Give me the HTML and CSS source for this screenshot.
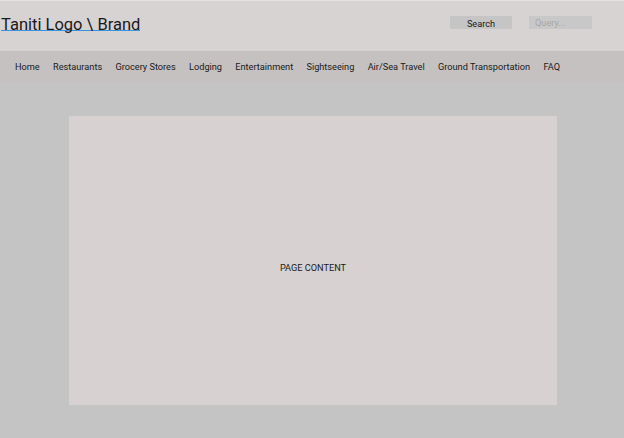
FILE: index.html
```html
<!DOCTYPE html>
<html lang="en">
<head>
<meta charset="utf-8">
<title>Taniti</title>
<link rel="stylesheet" href="styles.css">
</head>
<body>
<header class="site-header">
  <a class="brand" href="#">Taniti Logo \ Brand</a>
  <div class="search">
    <button class="search-btn" type="button">Search</button>
    <input class="search-input" type="text" placeholder="Query...">
  </div>
</header>
<nav class="main-nav">
  <a href="#">Home</a>
  <a href="#">Restaurants</a>
  <a href="#">Grocery Stores</a>
  <a href="#">Lodging</a>
  <a href="#">Entertainment</a>
  <a href="#">Sightseeing</a>
  <a href="#">Air/Sea Travel</a>
  <a href="#">Ground Transportation</a>
  <a href="#">FAQ</a>
</nav>
<main class="main">
  <section class="content">PAGE CONTENT</section>
</main>
</body>
</html>
```

FILE: styles.css
```css
* { box-sizing: border-box; }
html, body { margin: 0; padding: 0; }
body {
  background: #c4c4c4;
  font-family: Roboto, "Liberation Sans", sans-serif;
  color: #1e1e1e;
  height: 438px;
  overflow: hidden;
}
.site-header {
  height: 51px;
  background: #d8d3d3;
  border-top: 1px solid #e6e3e3;
  display: flex;
  align-items: flex-start;
  justify-content: space-between;
}
.brand {
  display: block;
  margin-top: 16px;
  margin-left: 1px;
  font-size: 16.5px;
  height: 14px;
  line-height: 16px;
  color: #1a1a1a;
  text-decoration: none;
  border-bottom: 1px solid #3a92dc;
}
.search {
  display: flex;
  gap: 17px;
  margin-top: 15px;
  margin-right: 32px;
}
.search-btn {
  width: 62px;
  height: 13px;
  padding: 0;
  border: 0;
  background: #c6c5c5;
  font-family: Roboto, "Liberation Sans", sans-serif;
  font-size: 9.2px;
  line-height: 13px;
  padding-top: 1px;
  color: #1a1a1a;
}
.search-input {
  width: 63px;
  height: 13px;
  padding: 0 0 0 6px;
  border: 0;
  background: #c9c8c8;
  font-family: Roboto, "Liberation Sans", sans-serif;
  font-size: 9.2px;
  line-height: 13px;
  outline: none;
}
.search-input::placeholder { color: #a8a6a6; }
.main-nav {
  height: 31px;
  background: #c5c1c0;
  display: flex;
  align-items: center;
  gap: 13.3px;
  padding-left: 15px;
}
.main-nav a {
  font-size: 9.2px;
  color: #1a1a1a;
  text-decoration: none;
}
.main {
  padding: 34px 67px 0 69px;
}
.content {
  height: 289px;
  background: #d7d1d1;
  display: flex;
  align-items: center;
  justify-content: center;
  padding-top: 14px;
  font-size: 9.2px;
  color: #1a1a1a;
}
```
